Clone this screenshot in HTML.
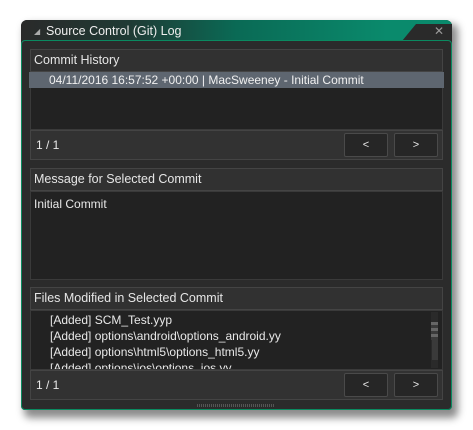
<!DOCTYPE html><html><head><style>
body{margin:0;width:473px;height:430px;background:#fff;font-family:"Liberation Sans",sans-serif;font-size:12px;color:#e8e8e8;position:relative;overflow:hidden}
.a{position:absolute;box-sizing:border-box}
.hdr{background:#313131;border:1px solid #444;padding:3px 0 0 3px;color:#e6e6e6;font-size:12.5px}
.box{background:#222;border:1px solid #3a3a3a}
.ftr{background:#323232;border:1px solid #444}
.btn{background:#262626;border:1px solid #4a4a4a;border-radius:2px;text-align:center;line-height:22px;font-size:11px}
</style></head><body>
<div class="a" style="left:24px;top:24px;width:434px;height:394px;background:rgba(0,0,0,.45);filter:blur(4px);border-radius:6px"></div>
<div class="a" style="left:21px;top:20px;width:431px;height:390px;background:#2b2b2b;border-radius:6px 6px 4px 4px"></div>
<div class="a" style="left:21px;top:20px;width:431px;height:21px;border-radius:6px 6px 0 0;background:linear-gradient(90deg,#2a2a2a 0%,#1f3a34 25%,#0a6a55 50%,#0a8a6c 85%,#0a8a6c 100%)"></div>
<div class="a" style="left:402px;top:24px;width:50px;height:17px;background:#2a2a2a;clip-path:polygon(14px 0,100% 0,100% 100%,0 100%)"></div>
<div class="a" style="left:34px;top:27px;font-size:8px;color:#aaa">◢</div>
<div class="a" style="left:46px;top:24px;font-size:12.5px;color:#eee">Source Control (Git) Log</div>
<div class="a" style="left:434px;top:24px;color:#999;font-size:12px">✕</div>
<div class="a" style="left:21px;top:40px;width:431px;height:370px;border:1px solid #0a8a60;border-radius:4px;background:#2b2b2b"></div>
<div class="a hdr" style="left:30px;top:49px;width:413px;height:23px">Commit History</div>
<div class="a box" style="left:30px;top:72px;width:413px;height:58px;border-top:0"></div>
<div class="a" style="left:29px;top:72px;width:415px;height:16px;background:#5e6670;padding-left:20px;line-height:16px;color:#f0f0f0">04/11/2016 16:57:52 +00:00 | MacSweeney - Initial Commit</div>
<div class="a ftr" style="left:30px;top:130px;width:413px;height:30px;padding:7px 0 0 5px">1 / 1</div>
<div class="a btn" style="left:344px;top:133px;width:44px;height:24px">&lt;</div>
<div class="a btn" style="left:394px;top:133px;width:44px;height:24px">&gt;</div>
<div class="a hdr" style="left:30px;top:168px;width:413px;height:23px">Message for Selected Commit</div>
<div class="a box" style="left:30px;top:191px;width:413px;height:89px;padding:5px 0 0 3px">Initial Commit</div>
<div class="a hdr" style="left:30px;top:287px;width:413px;height:23px">Files Modified in Selected Commit</div>
<div class="a box" style="left:30px;top:310px;width:413px;height:60px;overflow:hidden;padding:1px 0 0 19px;line-height:16px">[Added] SCM_Test.yyp<br>[Added] options\android\options_android.yy<br>[Added] options\html5\options_html5.yy<br>[Added] options\ios\options_ios.yy</div>
<div class="a" style="left:431px;top:312px;width:7px;height:56px;background:#2a2a2a"></div>
<div class="a" style="left:432px;top:322px;width:6px;height:38px;background:#3a3a3a"></div>
<div class="a" style="left:431px;top:322px;width:7px;height:18px;background:repeating-linear-gradient(#666 0 3px,#3a3a3a 3px 6px)"></div>
<div class="a ftr" style="left:30px;top:370px;width:413px;height:30px;padding:7px 0 0 5px">1 / 1</div>
<div class="a btn" style="left:344px;top:373px;width:44px;height:24px">&lt;</div>
<div class="a btn" style="left:394px;top:373px;width:44px;height:24px">&gt;</div>
<div class="a" style="left:197px;top:404px;width:78px;height:3px;background:repeating-linear-gradient(90deg,#555 0 1px,transparent 1px 2px)"></div>
</body></html>
